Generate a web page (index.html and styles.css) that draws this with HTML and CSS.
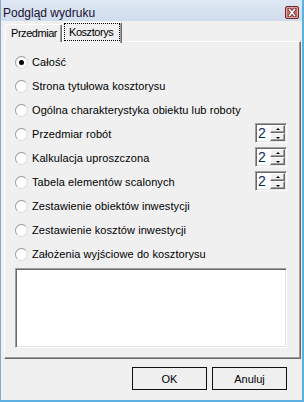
FILE: index.html
```html
<!DOCTYPE html>
<html lang="pl">
<head>
<meta charset="utf-8">
<title>Podgląd wydruku</title>
<link rel="stylesheet" href="styles.css">
</head>
<body>
<div class="window">
  <div class="titlebar">
    <span class="title">Podgląd wydruku</span>
    <span class="close">
      <svg width="14" height="13" viewBox="0 0 14 13">
        <rect x="0.5" y="0.5" width="13" height="12" rx="1.5" fill="#c96a6a" stroke="#6b2a2a"/>
        <rect x="1.5" y="1.5" width="11" height="10" rx="1" fill="none" stroke="#e9a9a9"/>
        <path d="M4.5 3.5 L9.5 9.5 M9.5 3.5 L4.5 9.5" stroke="#5a2020" stroke-width="3" stroke-linecap="square"/>
        <path d="M4.5 3.5 L9.5 9.5 M9.5 3.5 L4.5 9.5" stroke="#ffffff" stroke-width="1.6" stroke-linecap="square"/>
      </svg>
    </span>
  </div>
  <div class="client">
    <div class="tabs">
      <div class="tab">Przedmiar</div>
      <div class="tab active"><span class="focus">Kosztorys</span></div>
    </div>
    <div class="panel">
      <div class="row"><span class="radio checked"></span><span class="label">Całość</span></div>
      <div class="row"><span class="radio"></span><span class="label">Strona tytułowa kosztorysu</span></div>
      <div class="row"><span class="radio"></span><span class="label">Ogólna charakterystyka obiektu lub roboty</span></div>
      <div class="row"><span class="radio"></span><span class="label">Przedmiar robót</span>
        <span class="spin"><span class="field">2</span><span class="arrows"><span class="arrow up"></span><span class="arrow down"></span></span></span></div>
      <div class="row"><span class="radio"></span><span class="label">Kalkulacja uproszczona</span>
        <span class="spin"><span class="field">2</span><span class="arrows"><span class="arrow up"></span><span class="arrow down"></span></span></span></div>
      <div class="row"><span class="radio"></span><span class="label">Tabela elementów scalonych</span>
        <span class="spin"><span class="field">2</span><span class="arrows"><span class="arrow up"></span><span class="arrow down"></span></span></span></div>
      <div class="row"><span class="radio"></span><span class="label">Zestawienie obiektów inwestycji</span></div>
      <div class="row"><span class="radio"></span><span class="label">Zestawienie kosztów inwestycji</span></div>
      <div class="row"><span class="radio"></span><span class="label">Założenia wyjściowe do kosztorysu</span></div>
      <div class="memo"></div>
    </div>
    <div class="buttons">
      <button class="btn">OK</button>
      <button class="btn">Anuluj</button>
    </div>
  </div>
</div>
</body>
</html>
```
FILE: styles.css
```css
html, body {
  margin: 0;
  padding: 0;
  background: #f0f0f0;
}
body {
  font-family: "Liberation Sans", Arial, sans-serif;
  font-size: 11px;
  color: #000;
}
.window {
  width: 304px;
  height: 402px;
  box-sizing: border-box;
  border-left: 1px solid #8aa9c8;
  border-right: 2px solid #5db0e2;
  border-bottom: 2px solid #5db0e2;
  background: #f0f0f0;
  display: flex;
  flex-direction: column;
}
.titlebar {
  height: 21px;
  flex: none;
  display: flex;
  align-items: flex-start;
  padding-left: 2px;
  background: linear-gradient(#dfe8f3, #cfdcec);
}
.title {
  font-size: 12px;
  line-height: 14px;
  margin-top: 6px;
  color: #1a1030;
}
.close {
  margin-left: auto;
  margin-right: 3px;
  margin-top: 6px;
  width: 14px;
  height: 13px;
  display: block;
}
.close svg { display: block; }
.client {
  flex: 1;
  padding: 1px 0 0 3px;
  display: flex;
  flex-direction: column;
}
.tabs {
  height: 20px;
  display: flex;
  align-items: flex-end;
  padding-left: 1px;
}
.tab {
  position: relative;
  box-sizing: border-box;
  height: 18px;
  width: 57px;
  padding-left: 5px;
  line-height: 16px;
  letter-spacing: -0.45px;
  border-top: 1px solid #fff;
  border-left: 1px solid #fff;
  border-right: 1px solid #696969;
  box-shadow: inset -1px 0 #a0a0a0;
  background: #f0f0f0;
  border-radius: 2px 2px 0 0;
}
.tab.active {
  width: 60px;
  padding-left: 1px;
  z-index: 1;
  margin-bottom: -1px;
  height: 21px;
}
.focus {
  display: block;
  box-sizing: border-box;
  width: 56px;
  height: 18px;
  padding-left: 4px;
  line-height: 16px;
  border: 1px dotted #000;
}
.panel {
  box-sizing: border-box;
  width: 297px;
  height: 318px;
  margin-top: -1px;
  border-top: 1px solid #fff;
  border-left: 1px solid #fff;
  border-right: 1px solid #696969;
  border-bottom: 1px solid #696969;
  box-shadow: inset -1px -1px #a0a0a0;
  padding: 8px 13px 0 10px;
  display: flex;
  flex-direction: column;
}
.row {
  height: 24px;
  display: flex;
  align-items: center;
}
.radio {
  width: 13px;
  height: 13px;
  box-sizing: border-box;
  border-radius: 50%;
  border: 1px solid;
  border-color: #9a9a9a #dcdcdc #dcdcdc #9a9a9a;
  background: radial-gradient(circle at 40% 40%, #ffffff 55%, #e6e6e6);
  margin-right: 4px;
  flex: none;
  display: flex;
  align-items: center;
  justify-content: center;
}
.radio.checked::after {
  content: "";
  width: 5px;
  height: 5px;
  border-radius: 50%;
  background: #000;
}
.label {
  white-space: nowrap;
  letter-spacing: 0.08px;
}
.spin {
  margin-left: auto;
  margin-top: -2px;
  width: 32px;
  height: 20px;
  box-sizing: border-box;
  display: flex;
  border-top: 1px solid #a0a0a0;
  border-left: 1px solid #a0a0a0;
  border-right: 1px solid #fff;
  border-bottom: 1px solid #fff;
  box-shadow: inset 1px 1px #696969, inset -1px -1px #e3e3e3;
  background: #fff;
}
.field {
  width: 12px;
  padding-left: 2px;
  font-size: 14px;
  line-height: 18px;
  color: #0a1f5c;
}
.arrows {
  display: flex;
  flex-direction: column;
  padding: 1px 1px 1px 0;
  width: 16px;
}
.arrow {
  flex: 1;
  box-sizing: border-box;
  background: #f0f0f0;
  border-top: 1px solid #fff;
  border-left: 1px solid #fff;
  border-right: 1px solid #696969;
  border-bottom: 1px solid #696969;
  box-shadow: inset -1px -1px #a0a0a0;
  position: relative;
}
.arrow::after {
  content: "";
  position: absolute;
  left: 5px;
  width: 0;
  height: 0;
  border-left: 2px solid transparent;
  border-right: 2px solid transparent;
}
.arrow.up::after {
  top: 2px;
  border-bottom: 2px solid #000;
}
.arrow.down::after {
  top: 3px;
  border-top: 2px solid #000;
}
.memo {
  margin-top: 2px;
  width: 272px;
  height: 80px;
  box-sizing: border-box;
  background: #fff;
  border-top: 1px solid #a0a0a0;
  border-left: 1px solid #a0a0a0;
  border-right: 1px solid #fff;
  border-bottom: 1px solid #fff;
  box-shadow: inset 1px 1px #696969, inset -1px -1px #e3e3e3;
}
.buttons {
  display: flex;
  justify-content: flex-end;
  gap: 5px;
  margin-top: 8px;
  padding-right: 15px;
}
.btn {
  width: 75px;
  height: 23px;
  box-sizing: border-box;
  margin: 0;
  padding: 0;
  font-family: "Liberation Sans", Arial, sans-serif;
  font-size: 11px;
  color: #000;
  background: #efefef;
  border: 1px solid #101010;
  border-radius: 0;
}
```
